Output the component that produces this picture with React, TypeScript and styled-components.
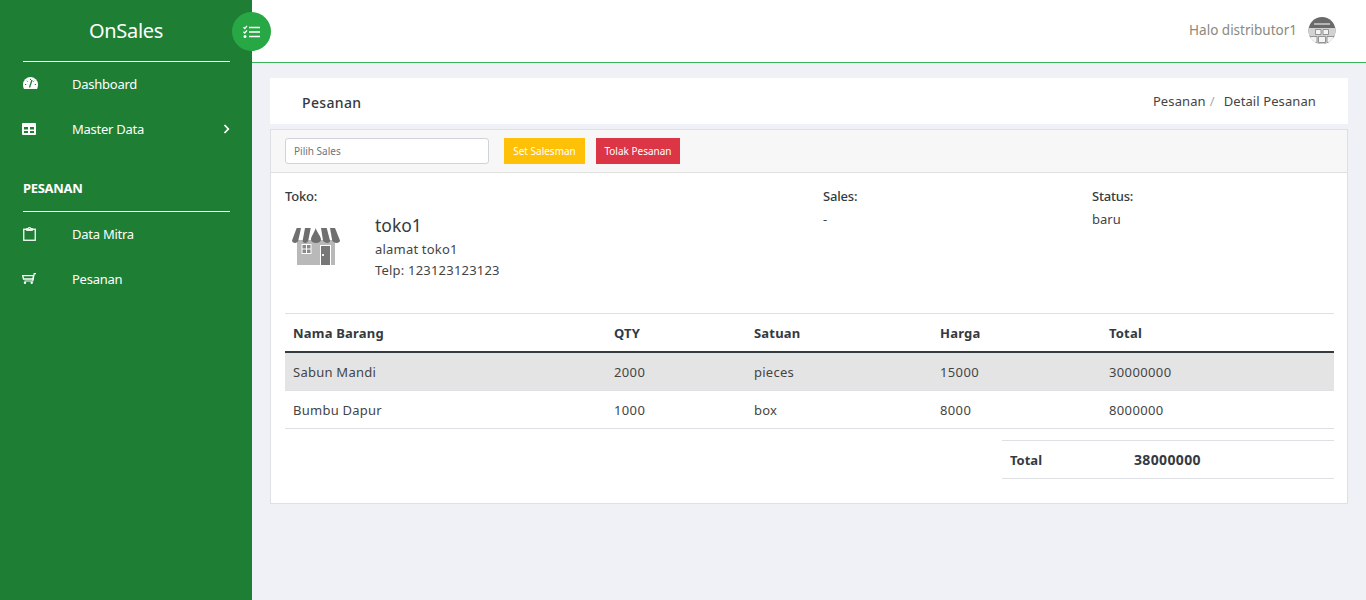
import React from "react";
import styled, { createGlobalStyle } from "styled-components";

const Global = createGlobalStyle`
  html, body { margin: 0; padding: 0; height: 100%; }
  body { font-family: "Noto Sans", "Open Sans", sans-serif; font-size: 13px; color: #343a40; background: #f0f1f7; }
  * { box-sizing: border-box; }
`;

const Page = styled.div`
  display: flex;
  width: 1366px;
  height: 600px;
  overflow: hidden;
`;

const Sidebar = styled.aside`
  position: relative;
  flex: 0 0 252px;
  background: #1e7e34;
  color: #fff;
  padding: 0 22px 0 23px;
`;

const Brand = styled.div`
  height: 62px;
  border-bottom: 1px solid #fff;
  display: flex;
  align-items: center;
  justify-content: center;
  font-size: 20px;
  letter-spacing: -0.3px;
  padding-right: 1px;
`;

const MenuItem = styled.div`
  display: flex;
  align-items: center;
  height: 45px;
  padding-bottom: 2px;
  font-size: 13px;
  letter-spacing: -0.25px;
`;

const MenuIcon = styled.span`
  flex: 0 0 49px;
  display: flex;
  align-items: center;
`;

const MenuLabel = styled.span`
  flex: 1;
`;

const Menu = styled.nav`
  padding-top: 0;
`;

const Section = styled.div`
  margin-top: 14px;
  height: 46px;
  padding-bottom: 2px;
  display: flex;
  align-items: center;
  font-size: 13px;
  font-weight: 700;
  letter-spacing: -0.3px;
  border-bottom: 1px solid #fff;
`;

const Toggle = styled.button`
  position: absolute;
  left: 232px;
  top: 12px;
  width: 39px;
  height: 39px;
  border: 0;
  padding: 0;
  border-radius: 50%;
  background: #28a745;
  color: #fff;
  display: flex;
  align-items: center;
  justify-content: center;
  z-index: 2;
`;

const Main = styled.main`
  flex: 1;
  min-width: 0;
  display: flex;
  flex-direction: column;
`;

const Topbar = styled.header`
  height: 63px;
  background: #fff;
  border-bottom: 1px solid #3ab55a;
  display: flex;
  align-items: center;
  justify-content: flex-end;
  gap: 11px;
  padding: 0 30px 0 0;
`;

const Greeting = styled.span`
  font-size: 13.5px;
  color: #8a8a80;
  margin-top: -2px;
`;

const Content = styled.div`
  padding: 15px 18px 0;
`;

const TitleBar = styled.div`
  height: 46px;
  background: #fff;
  display: flex;
  align-items: center;
  justify-content: space-between;
  padding: 0 32px;
  margin-bottom: 5px;
`;

const Title = styled.h1`
  margin: 2px 0 0;
  font-size: 14px;
  font-weight: 500;
  letter-spacing: 0.35px;
  color: #343a40;
`;

const Crumbs = styled.div`
  display: flex;
  font-size: 13px;
  letter-spacing: 0.1px;
  color: #444;
  margin-top: -1px;
`;

const CrumbSep = styled.span`
  color: #aaa;
  margin: 0 9px 0 4px;
`;

const Card = styled.section`
  height: 375px;
  background: #fff;
  border: 1px solid #dfe0e4;
`;

const CardHeader = styled.div`
  height: 43px;
  background: #f7f7f7;
  border-bottom: 1px solid #dfdfdf;
  display: flex;
  align-items: center;
  padding: 0 14px;
  gap: 11px;
`;

const SelectBox = styled.div`
  width: 204px;
  height: 26px;
  background: #fff;
  border: 1px solid #ced4da;
  border-radius: 3px;
  display: flex;
  align-items: center;
  padding-left: 8px;
  font-size: 10px;
  color: #6c757d;
  margin-right: 4px;
`;

const ActionButton = styled.button<{ $bg: string; $w: number }>`
  width: ${(p) => p.$w}px;
  height: 26px;
  border: 0;
  padding: 0;
  background: ${(p) => p.$bg};
  color: #fff;
  font-family: inherit;
  font-size: 10px;
`;

const CardBody = styled.div`
  padding: 14px 13px 0 14px;
`;

const InfoRow = styled.div`
  display: flex;
  height: 126px;
`;

const InfoCol = styled.div<{ $w: number }>`
  flex: 0 0 ${(p) => p.$w}px;
  line-height: 18px;
`;

const InfoLabel = styled.div`
  font-size: 13px;
  font-weight: 500;
  letter-spacing: -0.2px;
  color: #343a40;
  margin-bottom: 5px;
`;

const InfoValue = styled.div`
  font-size: 13px;
  color: #444;
`;

const Shop = styled.div`
  display: flex;
  align-items: flex-start;
`;

const ShopIcon = styled.div`
  flex: 0 0 90px;
  padding: 18px 0 0 7px;
`;

const ShopDetails = styled.div`
  padding-top: 3px;
`;

const ShopName = styled.div`
  font-size: 17.5px;
  line-height: 24px;
  margin: 0 0 2px;
  color: #343a40;
`;

const ShopLine = styled.div`
  font-size: 13px;
  line-height: 21px;
  letter-spacing: 0.2px;
  color: #444;
`;

const Table = styled.table`
  width: 1049px;
  border-collapse: collapse;
  table-layout: fixed;
  font-size: 13px;
  color: #444;
`;

const Th = styled.th<{ $w: number }>`
  width: ${(p) => p.$w}px;
  height: 38px;
  padding: 2px 8px 0;
  text-align: left;
  font-weight: 700;
  letter-spacing: 0.2px;
  color: #343a40;
  border-top: 1px solid #dfe0e4;
  border-bottom: 2px solid #343a40;
`;

const Td = styled.td<{ $num?: boolean; $tall?: boolean }>`
  height: ${(p) => (p.$tall ? 39 : 38)}px;
  padding: ${(p) => (p.$tall ? "2px" : "0")} 8px 0;
  letter-spacing: ${(p) => (p.$num ? "0.37px" : "0.25px")};
  border-bottom: 1px solid #dfe0e4;
`;

const Row = styled.tr<{ $shade?: boolean }>`
  background: ${(p) => (p.$shade ? "#e4e4e4" : "transparent")};
`;

const TotalWrap = styled.div`
  display: flex;
  justify-content: flex-end;
  margin-top: 11px;
`;

const TotalBox = styled.div`
  width: 332px;
  height: 39px;
  border-top: 1px solid #dfe0e4;
  border-bottom: 1px solid #dfe0e4;
  display: flex;
  align-items: center;
  padding-left: 8px;
  font-size: 13px;
  font-weight: 700;
  color: #343a40;
`;

const TotalLabel = styled.span`
  flex: 0 0 124px;
`;

const TotalValue = styled.span`
  font-size: 14px;
  letter-spacing: 0.35px;
`;

const Gauge = () => (
  <svg width="15" height="12" viewBox="0 0 15 12" fill="none" style={{ marginTop: -2 }}>
    <path d="M0 7.500a7.500 7.500 0 0 1 15 0c0 1.600-.4 3.300-1 4.500H1C.4 10.800 0 9.100 0 7.500Z" fill="#fff" />
    <path d="M6.500 10.500 9 3" stroke="#1e7e34" strokeWidth="1.300" />
    <path d="M2 7.500h1.200M3.800 3.800l.8.800M7.500 1.800V3M11.200 3.800l-.8.800M11.800 7.500H13" stroke="#1e7e34" />
  </svg>
);

const TableIcon = () => (
  <svg width="14" height="12" viewBox="0 0 14 12" fill="#fff" style={{ marginLeft: -1 }}>
    <path fillRule="evenodd" d="M1 0h12a1 1 0 0 1 1 1v10a1 1 0 0 1-1 1H1a1 1 0 0 1-1-1V1a1 1 0 0 1 1-1Zm1 4v2.500h4V4Zm6 0v2.500h4V4ZM2 8v2h4V8Zm6 0v2h4V8Z" />
  </svg>
);

const Clipboard = () => (
  <svg width="13" height="14" viewBox="0 0 13 14" fill="none" stroke="#fff">
    <rect x=".75" y="2.250" width="11.500" height="11" strokeWidth="1.300" />
    <path d="M3.500 3.500h6V1.500H7.500V.5h-2v1h-2Z" strokeWidth=".9" />
  </svg>
);

const Cart = () => (
  <svg width="14" height="11" viewBox="0 0 14 11" fill="none" stroke="#fff" style={{ marginLeft: -1 }}>
    <path d="M14 .6h-1.800L10.800 8H2.500" strokeWidth="1.200" />
    <path d="M.7 2.600h10.800L11 6H1.500Z" strokeWidth="1.300" />
    <circle cx="3" cy="9.800" r="1.200" fill="#fff" stroke="none" />
    <circle cx="9.700" cy="9.800" r="1.200" fill="#fff" stroke="none" />
  </svg>
);

const ChevronMark = styled.svg`
  margin-right: -1px;
`;

const Chevron = () => (
  <ChevronMark width="8" height="10" viewBox="0 0 8 10" fill="none" stroke="#fff" strokeWidth="1.800">
    <path d="M1.500 1l3.800 4-3.800 4" />
  </ChevronMark>
);

const TaskList = () => (
  <svg width="17" height="14" viewBox="0 0 17 14" fill="none" stroke="#fff">
    <path d="M6 2.500h11M6 7h11M6 11.500h11" strokeWidth="1.600" />
    <path d="M.5 2.200 1.800 3.500 4 .8M.5 6.700 1.800 8 4 5.300" strokeWidth="1.300" />
    <circle cx="2" cy="11.500" r="1.500" fill="#fff" stroke="none" />
  </svg>
);

const ShopSvg = () => (
  <svg width="48" height="37" viewBox="0 0 48 37">
    <rect x="5" y="12" width="38" height="25" fill="#b9b9b9" />
    <path d="M4.700 0H9L6.300 12.500C5.800 14 4.500 15 3 15s-3-1-3-2.500Z" fill="#6f6f6f" />
    <path d="M13 0h5.700l-2.400 12.500C15.800 14 14.800 15 13.300 15s-3-1-2.600-2.500Z" fill="#6f6f6f" />
    <path d="M23.700 0c1 4 5.300 8.500 5.300 11.500 0 2-2 3.500-5 3.500s-5-1.500-5-3.500C19 8.500 22.700 4 23.700 0Z" fill="#6f6f6f" />
    <path d="M29 0h5.700L38 12.500c.4 1.500-1 2.500-2.700 2.500-1.500 0-3.800-1-4.300-2.500Z" fill="#6f6f6f" />
    <path d="M38 0h5l5 12.500c0 1.500-1.500 2.500-3.500 2.500-1.500 0-3.800-1-4.300-2.500Z" fill="#6f6f6f" />
    <rect x="9.500" y="16" width="10" height="10" fill="#fff" />
    <path d="M10.500 17h3.500v3.500h-3.500ZM15 17h3.500v3.500H15ZM10.500 21.500h3.500V25h-3.500ZM15 21.500h3.500V25H15Z" fill="#8a8a8a" />
    <rect x="28" y="17" width="11" height="20" fill="#fff" />
    <rect x="29" y="18" width="9" height="19" fill="#777" />
    <rect x="30" y="26" width="2" height="2" fill="#eee" />
  </svg>
);

const AvatarSvg = () => (
  <svg width="28" height="27" viewBox="0 0 28 27" style={{ marginTop: -2 }}>
    <defs>
      <clipPath id="av"><circle cx="14" cy="13.500" r="13.500" /></clipPath>
    </defs>
    <g clipPath="url(#av)">
      <rect width="28" height="27" fill="#6a6a6a" />
      <rect x="6" y="6" width="16" height="2" fill="#b5b5b5" />
      <rect y="11" width="28" height="16" fill="#d2d2d2" />
      <path d="M7.500 12.500h5.500v5H7.500ZM15 12.500h5.500v5H15ZM2 19.500h7v6H2ZM10.500 19.500h7v6h-7ZM19 19.500h7v6h-7Z" fill="#f4f4f4" stroke="#808080" strokeWidth=".8" />
    </g>
  </svg>
);

const columns: [string, number][] = [
  ["Nama Barang", 321],
  ["QTY", 140],
  ["Satuan", 186],
  ["Harga", 169],
  ["Total", 233],
];

const rows = [
  ["Sabun Mandi", "2000", "pieces", "15000", "30000000"],
  ["Bumbu Dapur", "1000", "box", "8000", "8000000"],
];

export default function App() {
  return (
    <Page>
      <Global />
      <Sidebar>
        <Brand>OnSales</Brand>
        <Menu>
          <MenuItem><MenuIcon><Gauge /></MenuIcon><MenuLabel>Dashboard</MenuLabel></MenuItem>
          <MenuItem><MenuIcon><TableIcon /></MenuIcon><MenuLabel>Master Data</MenuLabel><Chevron /></MenuItem>
          <Section>PESANAN</Section>
          <MenuItem><MenuIcon><Clipboard /></MenuIcon><MenuLabel>Data Mitra</MenuLabel></MenuItem>
          <MenuItem><MenuIcon><Cart /></MenuIcon><MenuLabel>Pesanan</MenuLabel></MenuItem>
        </Menu>
        <Toggle aria-label="menu"><TaskList /></Toggle>
      </Sidebar>
      <Main>
        <Topbar>
          <Greeting>Halo distributor1</Greeting>
          <AvatarSvg />
        </Topbar>
        <Content>
          <TitleBar>
            <Title>Pesanan</Title>
            <Crumbs>Pesanan<CrumbSep>/</CrumbSep>Detail Pesanan</Crumbs>
          </TitleBar>
          <Card>
            <CardHeader>
              <SelectBox>Pilih Sales</SelectBox>
              <ActionButton $bg="#ffc107" $w={81}>Set Salesman</ActionButton>
              <ActionButton $bg="#dc3545" $w={84}>Tolak Pesanan</ActionButton>
            </CardHeader>
            <CardBody>
              <InfoRow>
                <InfoCol $w={538}>
                  <InfoLabel>Toko:</InfoLabel>
                  <Shop>
                    <ShopIcon><ShopSvg /></ShopIcon>
                    <ShopDetails>
                      <ShopName>toko1</ShopName>
                      <ShopLine>alamat toko1</ShopLine>
                      <ShopLine>Telp: 123123123123</ShopLine>
                    </ShopDetails>
                  </Shop>
                </InfoCol>
                <InfoCol $w={269}>
                  <InfoLabel>Sales:</InfoLabel>
                  <InfoValue>-</InfoValue>
                </InfoCol>
                <InfoCol $w={242}>
                  <InfoLabel>Status:</InfoLabel>
                  <InfoValue>baru</InfoValue>
                </InfoCol>
              </InfoRow>
              <Table>
                <thead>
                  <tr>{columns.map(([c, w]) => <Th key={c} $w={w}>{c}</Th>)}</tr>
                </thead>
                <tbody>
                  {rows.map((r, i) => (
                    <Row key={r[0]} $shade={i === 0}>
                      {r.map((v) => <Td key={v} $tall={i === 0} $num={/^\d+$/.test(v)}>{v}</Td>)}
                    </Row>
                  ))}
                </tbody>
              </Table>
              <TotalWrap>
                <TotalBox><TotalLabel>Total</TotalLabel><TotalValue>38000000</TotalValue></TotalBox>
              </TotalWrap>
            </CardBody>
          </Card>
        </Content>
      </Main>
    </Page>
  );
}
